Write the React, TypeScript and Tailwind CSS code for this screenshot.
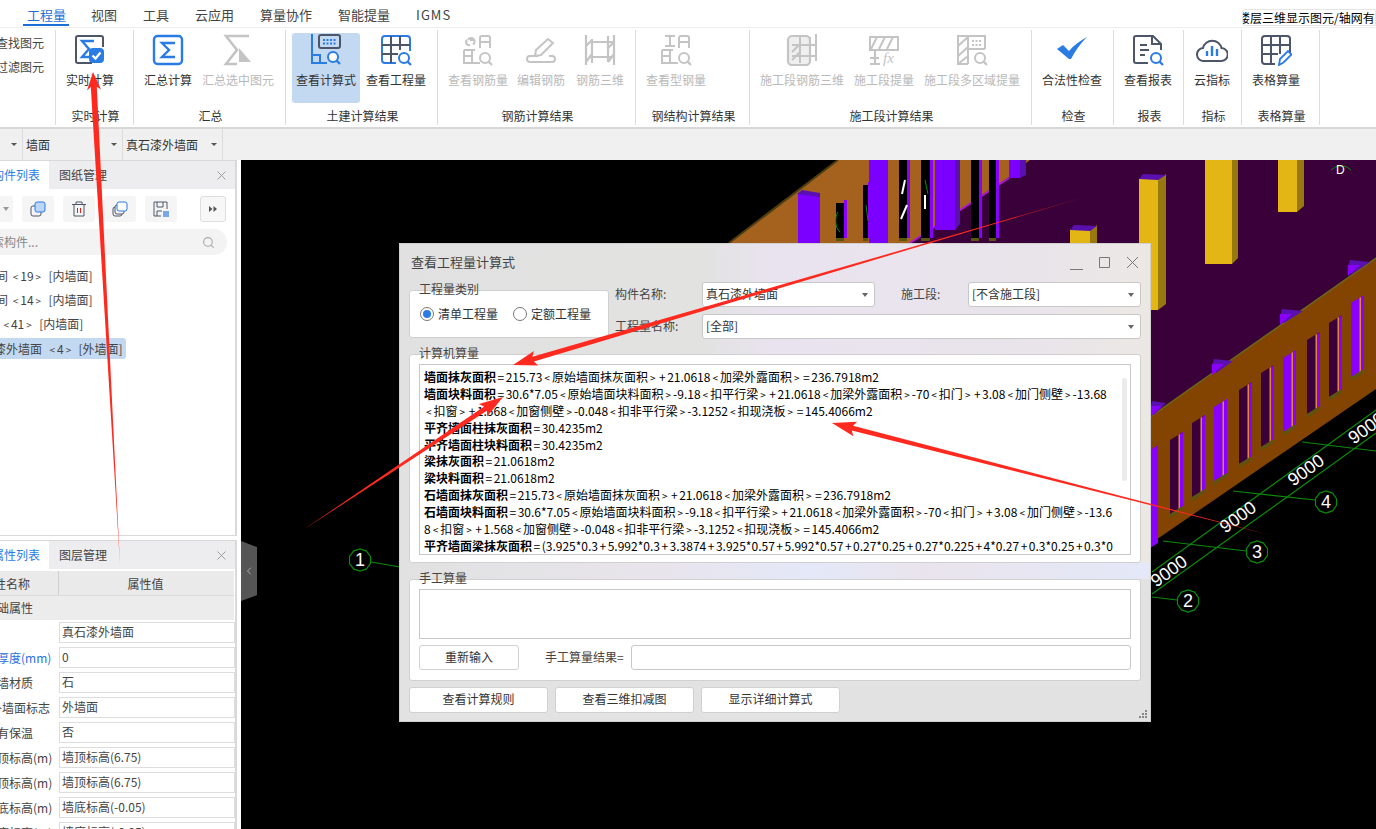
import { Search, X, ChevronLeft } from "lucide-react";
import type { ReactNode } from "react";

const BLUE = "#2a7be4";
const SLATE = "#4d5669";
const GRAY = "#c4c4c4";

function Ico({ children }: { children: ReactNode }) {
  return (
    <svg viewBox="0 0 32 32" className="w-8 h-8 shrink-0" fill="none" strokeWidth="2">
      {children}
    </svg>
  );
}

function Mag({ x, y, c }: { x: number; y: number; c: string }) {
  return (
    <g stroke={c}>
      <circle cx={x} cy={y} r="5" fill="#fff" />
      <path d={`M${x + 3.6} ${y + 3.6}l3.4 3.4`} strokeWidth="2.2" />
    </g>
  );
}

const icons: Record<string, ReactNode> = {
  realtime: (
    <Ico>
      <path d="M18 29H4a2 2 0 0 1-2-2V4a2 2 0 0 1 2-2h23a2 2 0 0 1 2 2v9" stroke={SLATE} />
      <path d="M20 7H8l7 8-7 8h7" stroke={BLUE} strokeWidth="2.4" />
      <rect x="15" y="14" width="15" height="15" rx="4" fill={BLUE} />
      <path d="M18.5 21.5l3 3 5-6" stroke="#fff" strokeWidth="2.2" />
    </Ico>
  ),
  sum: (
    <Ico>
      <rect x="2" y="2" width="28" height="28" rx="3.5" stroke={BLUE} strokeWidth="2.4" />
      <path d="M23 9H10l7 7-7 7h13" stroke={BLUE} strokeWidth="2.4" />
    </Ico>
  ),
  sumSel: (
    <Ico>
      <path d="M27 2H4l11 14L4 30h11" stroke={GRAY} strokeWidth="2.6" />
      <path d="M17 14l12 14H17z" fill={GRAY} />
    </Ico>
  ),
  formula: (
    <Ico>
      <path d="M2 0v29h15M2 21h8v8" stroke={BLUE} />
      <rect x="9" y="1" width="21" height="13" rx="2" stroke={SLATE} />
      <path d="M13 6h14M13 9.5h14" stroke={BLUE} strokeDasharray="2 1.5" />
      <Mag x={23} y={23} c={BLUE} />
    </Ico>
  ),
  table: (
    <Ico>
      <path d="M16 29H5a3 3 0 0 1-3-3V5a3 3 0 0 1 3-3h22a3 3 0 0 1 3 3v12" stroke={BLUE} />
      <path d="M2 11h28M2 20h16M11 2v27M20 2v14" stroke={SLATE} />
      <Mag x={24} y={24} c={BLUE} />
    </Ico>
  ),
  rebar: (
    <Ico>
      <path d="M6 6a3.500 3.500 0 1 1 5 4.500M5 6a3 3 0 0 0 3 5M12 6H8" stroke={GRAY} />
      <path d="M18 14V4a2 2 0 0 1 2-2h6a2 2 0 0 1 2 2v10M18 8h10" stroke={GRAY} />
      <path d="M2 16v13h16M2 22h8M10 16v13M2 16h11" stroke={GRAY} />
      <Mag x={23} y={24} c={GRAY} />
    </Ico>
  ),
  edit: (
    <Ico>
      <path d="M10 22l1-6L23 5l5 4-12 12z" stroke={GRAY} />
      <path d="M13 22H5a3 3 0 0 0 0 6h22a3 3 0 0 0 0-6h-3" stroke={GRAY} />
    </Ico>
  ),
  rebar3d: (
    <Ico>
      <path d="M2 1v30M8 5v24M24 2v26M30 1v30M8 8h22M8 23h22M2 12l6-6M24 14l6-6M2 28l6-8M24 28l6-8" stroke={GRAY} strokeWidth="2.2" />
    </Ico>
  ),
  steel: (
    <Ico>
      <path d="M5 2h10M5 12h10M10 2v10" stroke={GRAY} />
      <path d="M19 14V4a2 2 0 0 1 2-2h6a2 2 0 0 1 2 2v10M19 8h10" stroke={GRAY} />
      <path d="M2 16v13h16M2 22h8M10 16v13M2 16h11" stroke={GRAY} />
      <Mag x={24} y={24} c={GRAY} />
    </Ico>
  ),
  seg3d: (
    <Ico>
      <rect x="2" y="2" width="22" height="29" rx="4" stroke={GRAY} strokeWidth="2.2" fill="#efefef" />
      <path d="M14 3v26M24 3v26M30 0v27M6 11h24M6 22h24M6 18l8-8M6 26l8-8" stroke={GRAY} />
    </Ico>
  ),
  segFx: (
    <Ico>
      <path d="M2 3h28v13H2zM9 3L3 15M17 3l-6 12M25 3l-6 12M7 16v14M2 24h9M2 30h10" stroke={GRAY} />
      <text x="15" y="29" fontFamily="Liberation Serif, serif" fontStyle="italic" fontSize="15" fill={GRAY}>fx</text>
    </Ico>
  ),
  segArea: (
    <Ico>
      <path d="M12 30H2V2h27v13M12 2v28M2 12l10-9M2 22l10-9M2 30l10-8M12 15h17" stroke={GRAY} />
      <path d="M16 7h10M16 11h10" stroke={GRAY} strokeDasharray="2 1.5" />
      <Mag x={24} y={24} c={GRAY} />
    </Ico>
  ),
  check: (
    <Ico>
      <path d="M1 15l6-4 6 6C18 11 24 7 31 3c-7 7-12 14-16 22h-2z" fill={BLUE} />
    </Ico>
  ),
  report: (
    <Ico>
      <path d="M16 29H4a2 2 0 0 1-2-2V4a2 2 0 0 1 2-2h17l8 8v6M20 2v8h9" stroke={SLATE} />
      <path d="M8 11h7M8 16h9M8 21h5" stroke={SLATE} />
      <Mag x={24} y={24} c={BLUE} />
    </Ico>
  ),
  cloud: (
    <Ico>
      <path d="M8 27a6.500 6.500 0 0 1-1-13 9.500 9.500 0 0 1 18.500 0A6.500 6.500 0 0 1 25 27z" stroke={SLATE} />
      <path d="M11 17v5M16 12v10M21 15v7" stroke={BLUE} strokeWidth="2.4" />
    </Ico>
  ),
  sheet: (
    <Ico>
      <path d="M15 30H5a3 3 0 0 1-3-3V5a3 3 0 0 1 3-3h22a3 3 0 0 1 3 3v14" stroke={SLATE} />
      <path d="M2 11h28M2 20h16M11 2v28M20 2v18" stroke={SLATE} />
      <path d="M19 31l1-6 8-8 3.500 3.500-8 8z" stroke={BLUE} fill="#fff" strokeWidth="1.800" />
    </Ico>
  ),
};

type Item = { icon: string; label: string; w: number; off?: boolean; on?: boolean };
type Group = { label: string; w: number; pl: number; items: Item[] };

const groups: Group[] = [
  { label: "实时计算", w: 78, pl: 0, items: [{ icon: "realtime", label: "实时计算", w: 68 }] },
  {
    label: "汇总",
    w: 152,
    pl: 2,
    items: [
      { icon: "sum", label: "汇总计算", w: 64 },
      { icon: "sumSel", label: "汇总选中图元", w: 76, off: true },
    ],
  },
  {
    label: "土建计算结果",
    w: 152,
    pl: 6,
    items: [
      { icon: "formula", label: "查看计算式", w: 68, on: true },
      { icon: "table", label: "查看工程量", w: 72 },
    ],
  },
  {
    label: "钢筋计算结果",
    w: 198,
    pl: 5,
    items: [
      { icon: "rebar", label: "查看钢筋量", w: 70, off: true },
      { icon: "edit", label: "编辑钢筋", w: 56, off: true },
      { icon: "rebar3d", label: "钢筋三维", w: 62, off: true },
    ],
  },
  { label: "钢结构计算结果", w: 114, pl: 5, items: [{ icon: "steel", label: "查看型钢量", w: 70, off: true }] },
  {
    label: "施工段计算结果",
    w: 282,
    pl: 4,
    items: [
      { icon: "seg3d", label: "施工段钢筋三维", w: 96, off: true },
      { icon: "segFx", label: "施工段提量", w: 68, off: true },
      { icon: "segArea", label: "施工段多区域提量", w: 108, off: true },
    ],
  },
  { label: "检查", w: 82, pl: 4, items: [{ icon: "check", label: "合法性检查", w: 72 }] },
  { label: "报表", w: 70, pl: 4, items: [{ icon: "report", label: "查看报表", w: 60 }] },
  { label: "指标", w: 58, pl: 4, items: [{ icon: "cloud", label: "云指标", w: 48 }] },
  { label: "表格算量", w: 78, pl: 4, items: [{ icon: "sheet", label: "表格算量", w: 60 }] },
];

function Ribbon() {
  return (
    <div className="flex h-[102px] shrink-0 border-t border-[#eeeeee] border-b-2 border-b-[#d8d8d8] bg-white">
      <div className="w-[56px] border-r border-[#dcdcdc] my-[2px] flex flex-col gap-[8px] pt-[5px] pl-0 text-[#444] overflow-hidden">
        <span className="-ml-[4px] h-[16px] leading-[16px] whitespace-nowrap">查找图元</span>
        <span className="-ml-[4px] h-[16px] leading-[16px] whitespace-nowrap">过滤图元</span>
      </div>
      {groups.map((g) => (
        <div key={g.label} className="flex flex-col border-r border-[#dcdcdc] my-[2px]" style={{ width: g.w }}>
          <div className="flex h-[73px] pt-[3px]" style={{ paddingLeft: g.pl }}>
            {g.items.map((it) => (
              <div
                key={it.label}
                className={`h-[70px] flex flex-col items-center pt-[1px] rounded-[3px] ${it.on ? "bg-[#c3d9f1]" : ""}`}
                style={{ width: it.w }}
              >
                {icons[it.icon]}
                <span className={`mt-[6px] leading-[16px] whitespace-nowrap ${it.off ? "text-[#b9b9b9]" : "text-[#333]"}`}>
                  {it.label}
                </span>
              </div>
            ))}
          </div>
          <div className="flex-1 flex items-center justify-center pl-[2px] text-[#333] pt-[3px]">{g.label}</div>
        </div>
      ))}
    </div>
  );
}

function ToolBtn({ children, boxed }: { children: ReactNode; boxed?: boolean }) {
  return (
    <div
      className={`h-[26px] flex items-center justify-center rounded-[3px] ${
        boxed ? "w-[26px] ml-[14px] border border-[#dedede] bg-[#f7f7f7]" : "w-[32px] mr-[9px] bg-[#f5f5f5]"
      }`}
    >
      {children}
    </div>
  );
}

// the reference font sets < > + = wider than Noto does
function Seg({ t }: { t: string }) {
  return (
    <>
      {t.split(/([<>+=])/).map((s, i) =>
        s === "<" || s === ">" ? (
          <span key={i} className="mx-[2px] text-[10px]">{s}</span>
        ) : s === "+" || s === "=" ? (
          <span key={i} className="mx-[1.5px]">{s}</span>
        ) : (
          s
        ),
      )}
    </>
  );
}

function ComponentPanel() {
  return (
    <div className="h-[376px] shrink-0 border-r-2 border-b border-t border-[#d9d9d9] bg-white flex flex-col overflow-hidden">
      <PanelTabs a="构件列表" b="图纸管理" />
      <div className="flex items-center mt-[7px] -ml-[9px]">
        <div className="w-[22px] h-[26px] bg-[#f5f5f5] rounded-[3px] mr-[9px] flex items-center justify-end pr-[4px]">
          <span className="w-0 h-0 border-x-[3px] border-x-transparent border-t-[4px] border-t-[#999]" />
        </div>
        <ToolBtn>
          <svg width="16" height="16" viewBox="0 0 16 16" fill="none">
            <rect x="1" y="5" width="10" height="10" rx="2" stroke={SLATE} />
            <rect x="5" y="1" width="10" height="10" rx="2" stroke={BLUE} fill="#bcd6f7" />
          </svg>
        </ToolBtn>
        <ToolBtn>
          <svg width="16" height="16" viewBox="0 0 16 16" fill="none">
            <path d="M1 3.500h14M5 3V1h6v2M3 4v11h10V4" stroke={SLATE} />
            <path d="M6.500 7v5M9.500 7v5" stroke="#e02020" />
          </svg>
        </ToolBtn>
        <ToolBtn>
          <svg width="16" height="16" viewBox="0 0 16 16" fill="none">
            <rect x="1" y="6" width="9" height="9" rx="2" stroke={SLATE} />
            <rect x="3" y="4" width="9" height="9" rx="2" stroke={SLATE} fill="#f5f5f5" />
            <rect x="5" y="1" width="10" height="9" rx="2" stroke={BLUE} fill="#fff" />
          </svg>
        </ToolBtn>
        <ToolBtn>
          <svg width="16" height="16" viewBox="0 0 16 16" fill="none">
            <path d="M8 15H1V1h13v7M4 1v5h6V1M4 15v-5h5" stroke={SLATE} />
            <rect x="10" y="10" width="6" height="6" fill="#7aa9ea" />
          </svg>
        </ToolBtn>
        <ToolBtn boxed>
          <svg width="8" height="6" viewBox="0 0 8 6" fill="#555">
            <path d="M0 0l3.500 3L0 6zM4.500 0L8 3 4.500 6z" />
          </svg>
        </ToolBtn>
      </div>
      <div className="mt-[7px] h-[26px] w-[227px] rounded-r-full bg-[#f3f3f3] flex items-center justify-between pr-[12px] overflow-hidden">
        <span className="-ml-[8px] text-[#888] whitespace-nowrap">索构件...</span>
        <Search size={13} className="text-[#aaa]" />
      </div>
      <div className="mt-[9px] flex flex-col text-[#444]">
        <div className="h-[24px] leading-[24px] -ml-[4px] whitespace-pre"><Seg t="间 <19>  [内墙面]" /></div>
        <div className="h-[24px] leading-[24px] -ml-[4px] whitespace-pre"><Seg t="间 <14>  [内墙面]" /></div>
        <div className="h-[24px] leading-[24px] -ml-[4px] whitespace-pre"><Seg t="  <41>  [内墙面]" /></div>
        <div className="h-[24px] flex items-center">
          <div className="h-[21px] w-[126px] leading-[21px] bg-[#c3d9f1] rounded-r-[3px] pl-0 overflow-hidden whitespace-pre">
            <span className="-ml-[6px] inline-block"><Seg t="漆外墙面  <4>  [外墙面]" /></span>
          </div>
        </div>
      </div>
    </div>
  );
}

function PanelTabs({ a, b }: { a: string; b: string }) {
  return (
    <div className="h-[28px] shrink-0 bg-[#ededef] flex items-center">
      <div className="w-[49px] h-full bg-white text-[#2a7be4] flex items-center justify-end pr-[9px] overflow-hidden whitespace-nowrap">
        <span className="shrink-0">{a}</span>
      </div>
      <span className="ml-[10px] text-[#444]">{b}</span>
      <X size={15} className="ml-auto mr-[6px] text-[#999]" strokeWidth={1.5} />
    </div>
  );
}

const props = [
  { k: "", v: "真石漆外墙面" },
  { k: "厚度(mm)", v: "0", blue: true },
  { k: "墙材质", v: "石" },
  { k: "外墙面标志", v: "外墙面", far: true },
  { k: "有保温", v: "否" },
  { k: "顶标高(m)", v: "墙顶标高(6.75)" },
  { k: "顶标高(m)", v: "墙顶标高(6.75)" },
  { k: "底标高(m)", v: "墙底标高(-0.05)" },
  { k: "底标高(m)", v: "墙底标高(-0.05)" },
];

function PropertyPanel() {
  return (
    <div className="flex-1 mt-[4px] border-r-2 border-t border-[#d9d9d9] bg-white flex flex-col overflow-hidden">
      <PanelTabs a="属性列表" b="图层管理" />
      <div className="h-[25px] mt-[2px] shrink-0 flex bg-[#eaeaea] text-[#444] border-b border-[#dcdcdc] mr-[1px]">
        <div className="w-[59px] border-r border-[#cfcfcf] leading-[25px] overflow-hidden whitespace-nowrap">
          <span className="-ml-[6px] inline-block">性名称</span>
        </div>
        <div className="flex-1 text-center leading-[25px] pr-[2px]">属性值</div>
      </div>
      <div className="h-[24px] shrink-0 bg-[#ececec] leading-[24px] text-[#444] mr-[1px] overflow-hidden whitespace-nowrap">
        <span className="-ml-[3px] inline-block">础属性</span>
      </div>
      {props.map((p, i) => (
        <div key={i} className="h-[25px] shrink-0 flex items-center">
          <div className={`w-[59px] overflow-hidden whitespace-nowrap ${p.blue ? "text-[#2a6fdf]" : "text-[#444]"}`}>
            <span className={`inline-block ${p.far ? "-ml-[10px]" : "-ml-[3px]"}`}>{p.k}</span>
          </div>
          <div className="w-[176px] h-[21px] border border-[#dddddd] leading-[18px] pl-[2px] text-[#444]">{p.v}</div>
        </div>
      ))}
    </div>
  );
}

const rightSlots = [
  [1351, 303, true],
  [1329, 323, false],
  [1307, 340, false],
  [1283, 358, true],
  [1261, 373, false],
  [1239, 390, false],
  [1214, 407, true],
  [1192, 423, false],
  [1170, 440, false],
] as const;

function bubble(x: number, y: number) {
  const pts = [];
  for (let i = 0; i < 10; i++) {
    const a = (i * Math.PI) / 5 + Math.PI / 10;
    pts.push(`${(x + 11 * Math.cos(a)).toFixed(1)},${(y + 11 * Math.sin(a)).toFixed(1)}`);
  }
  return pts.join(" ");
}

function Scene() {
  return (
    <svg viewBox="241 160 1135 669" className="block w-full h-full bg-black">
      {/* floor */}
      <polygon points="1030,160 1376,160 1376,258 1150,417 900,300 910,243" fill="#3a0039" />
      {/* far wall */}
      <polygon points="838,160 1030,160 1009,177 910,243 729,243" fill="#a5621f" />
      <path d="M838 160L729 243" stroke="#4d3d10" strokeWidth="2" />
      <path d="M1009 178L910 243" stroke="#b018d0" strokeWidth="2" />
      {[
        [836, 203, 844],
        [863, 185, 868],
        [899, 160, 907],
        [921, 160, 930],
        [971, 160, 979],
        [989, 160, 996],
      ].map(([x, y, r]) => (
        <g key={x}>
          <rect x={x} y={y} width={r - x} height={238 - y} fill="#000" />
          <rect x={r} y={y - 3} width="3" height={241 - y} fill="#8a00ff" />
          <rect x={x} y={238} width={r - x} height="3" fill="#5a5510" />
        </g>
      ))}
      <path d="M907 205l-6 14M905 180l-3 14M925 195v14" stroke="#fff" strokeWidth="2" fill="none" />
      <path d="M838 212a7 12 0 0 0 2 20M866 205l2 16M925 180l3 14" stroke="#0a8a0a" fill="none" />
      <rect x="798" y="194" width="22" height="50" fill="#7b00ff" />
      <polygon points="797,194 802,190 820,193 820,197" fill="#5a10b0" />
      <rect x="869" y="160" width="19" height="84" fill="#7b00ff" />
      <rect x="935" y="160" width="20" height="70" fill="#7b00ff" />
      <polygon points="955,160 960,160 960,224 955,230" fill="#5a10b0" />
      <rect x="1009" y="160" width="11" height="18" fill="#7b00ff" />
      <polygon points="1020,160 1026,160 1026,175 1020,178" fill="#5a10b0" />
      {/* yellow columns */}
      {[
        [1139, 179, 1158, 310, 1166],
        [1205, 150, 1232, 264, 1238],
        [1278, 150, 1297, 212, 1304],
        [1070, 230, 1090, 300, 1097],
      ].map(([x, t, r, b, s]) => (
        <g key={x}>
          <rect x={x} y={t} width={r - x} height={b - t} fill="#e3b616" />
          <polygon points={`${r},${t} ${s},${t - 5} ${s},${b - 6} ${r},${b}`} fill="#97790f" />
          <polygon points={`${x},${t} ${x + 4},${t - 5} ${s},${t - 4} ${r},${t + 1}`} fill="#5a10b0" />
        </g>
      ))}
      <path d="M1331 170a14 14 0 0 1 20 0" stroke="#0a8a0a" fill="none" />
      <text x="1336" y="174" fontSize="12" fill="#fff" fontFamily="Liberation Sans, sans-serif">D</text>
      {/* near wall */}
      <polygon points="1376,258 1150,417 1150,544 1376,389" fill="#834402" />
      <path d="M1376 258L1150 417" stroke="#6a6a1a" strokeWidth="1.500" />
      {rightSlots.map(([x, y, full]) => (
        <g key={x}>
          <polygon points={`${x},${y} ${x + 13},${y - 8} ${x + 13},${y + 66} ${x},${y + 74}`} fill={full ? "#8a00ff" : "#3a0039"} />
          <polygon points={`${x + 9},${y - 5} ${x + 13},${y - 8} ${x + 13},${y + 66} ${x + 9},${y + 69}`} fill="#8a00ff" />
          <polygon points={`${x + 8.5},${y - 5} ${x + 10},${y - 6} ${x + 10},${y + 68} ${x + 8.5},${y + 69}`} fill="#e08a30" />
          <polygon points={`${x},${y + 74} ${x + 13},${y + 66} ${x + 13},${y + 69} ${x},${y + 78}`} fill="#5a5510" />
        </g>
      ))}
      <polygon points="1150,450 1158,445 1158,543 1150,548" fill="#8a00ff" />
      {[
        [1348, 268, 1370],
        [1280, 317, 1303],
        [1212, 367, 1233],
        [1150, 409, 1166],
      ].map(([x, y, r]) => (
        <g key={x}>
          <polygon points={`${x},${y} ${x + 2},${y - 8} ${r},${y - 6} ${x + 4},${y + 6}`} fill="#5a10b0" />
          <polygon points={`${x},${y - 3} ${x + 12},${y - 3} ${x},${y + 8}`} fill="#8a00ff" />
        </g>
      ))}
      {/* grid */}
      <g stroke="#0a8a0a" strokeWidth="1.200" fill="none">
        <path d="M1152 572L1376 410M1152 594L1376 433" />
        <path d="M1152 597L1177 600M1163 541L1246 551M1233 491L1315 500M1302 442L1376 451M371 562L400 567" />
        {[
          [360, 560],
          [1188, 601],
          [1257, 552],
          [1326, 502],
        ].map(([x, y]) => (
          <polygon key={x} points={bubble(x, y)} fill="#000" />
        ))}
      </g>
      <g fill="#fff" fontSize="18" fontFamily="Liberation Sans, sans-serif" textAnchor="middle">
        <text x="360" y="566">1</text>
        <text x="1188" y="607">2</text>
        <text x="1257" y="558">3</text>
        <text x="1326" y="508">4</text>
        <text transform="translate(1172.5 576) rotate(-36)">9000</text>
        <text transform="translate(1241.5 522) rotate(-36)">9000</text>
        <text transform="translate(1309.5 475) rotate(-36)">9000</text>
        <text transform="translate(1370 433) rotate(-36)">9000</text>
      </g>
    </svg>
  );
}

function Select({ value, className }: { value: string; className: string }) {
  return (
    <div className={`h-[25px] bg-white rounded-[3px] border border-[#c8c8c8] flex items-center justify-between pl-[3px] pr-[6px] text-[#333] ${className}`}>
      <span className="pb-[2px]">{value}</span>
      <span className="w-0 h-0 border-x-[3px] border-x-transparent border-t-[4px] border-t-[#666]" />
    </div>
  );
}

type Line = { b?: string; t: string };

const lines: Line[] = [
  { b: "墙面抹灰面积", t: "=215.73<原始墙面抹灰面积>+21.0618<加梁外露面积>=236.7918m2" },
  { b: "墙面块料面积", t: "=30.6*7.05<原始墙面块料面积>-9.18<扣平行梁>+21.0618<加梁外露面积>-70<扣门>+3.08<加门侧壁>-13.68" },
  { t: "<扣窗>+1.568<加窗侧壁>-0.048<扣非平行梁>-3.1252<扣现浇板>=145.4066m2" },
  { b: "平齐墙面柱抹灰面积", t: "=30.4235m2" },
  { b: "平齐墙面柱块料面积", t: "=30.4235m2" },
  { b: "梁抹灰面积", t: "=21.0618m2" },
  { b: "梁块料面积", t: "=21.0618m2" },
  { b: "石墙面抹灰面积", t: "=215.73<原始墙面抹灰面积>+21.0618<加梁外露面积>=236.7918m2" },
  { b: "石墙面块料面积", t: "=30.6*7.05<原始墙面块料面积>-9.18<扣平行梁>+21.0618<加梁外露面积>-70<扣门>+3.08<加门侧壁>-13.6" },
  { t: "8<扣窗>+1.568<加窗侧壁>-0.048<扣非平行梁>-3.1252<扣现浇板>=145.4066m2" },
  { b: "平齐墙面梁抹灰面积", t: "=(3.925*0.3+5.992*0.3+3.3874+3.925*0.57+5.992*0.57+0.27*0.25+0.27*0.225+4*0.27+0.3*0.25+0.3*0" },
];

function Btn({ label, className }: { label: string; className: string }) {
  return (
    <div className={`h-[26px] pb-[2px] bg-white rounded-[3px] border border-[#d0d0d0] flex items-center justify-center text-[#333] ${className}`}>
      {label}
    </div>
  );
}

function Dialog() {
  return (
    <div className="absolute left-[399px] top-[243px] w-[752px] h-[479px] border border-[#d0d0d0] bg-[linear-gradient(90deg,#e1e1e1_0%,#e2e2e1_40%,#e9e3ef_50%,#e8e4ea_85%,#ebe8e4_100%)] flex flex-col text-[12px]">
      <div className="px-[9px] flex flex-col shrink-0">
        <div className="h-[38px] shrink-0 flex items-center text-[13px] text-[#444] pl-[2px]">
          <span className="pb-[2px]">查看工程量计算式</span>
          <svg width="72" height="16" viewBox="0 0 72 16" className="ml-auto text-[#777]" fill="none" stroke="currentColor">
            <path d="M1 14.500h13M30.500 2.500h10v10h-10zM58 2l11 11M69 2L58 13" />
          </svg>
        </div>
        <div className="h-[57px] shrink-0 flex">
          <div className="w-[200px] h-[48px] mt-[8px] bg-white rounded-[3px] border border-[#d0d0d0] flex flex-col">
            <span className="-mt-[9px] ml-[9px] h-[14px] leading-[14px] text-[#444]">工程量类别</span>
            <div className="flex items-center mt-[9px] ml-[10px] text-[#333]">
              <span className="w-[14px] h-[14px] rounded-full border border-[#777] flex items-center justify-center">
                <span className="w-[8px] h-[8px] rounded-full bg-[#2a7be4]" />
              </span>
              <span className="ml-[4px]">清单工程量</span>
              <span className="ml-[15px] w-[14px] h-[14px] rounded-full border border-[#777]" />
              <span className="ml-[4px]">定额工程量</span>
            </div>
          </div>
          <div className="flex-1 ml-[6px] flex flex-col gap-[7px]">
            <div className="flex items-center">
              <span className="w-[87px] text-[#444] pb-[2px]">构件名称:</span>
              <Select value="真石漆外墙面" className="w-[173px]" />
              <span className="ml-[26px] w-[67px] text-[#444] pb-[2px]">施工段:</span>
              <Select value="[不含施工段]" className="w-[173px]" />
            </div>
            <div className="flex items-center">
              <span className="w-[87px] text-[#444] pb-[2px]">工程量名称:</span>
              <Select value="[全部]" className="w-[439px]" />
            </div>
          </div>
        </div>
        <div className="h-[209px] mt-[15px] shrink-0 bg-white rounded-[3px] border border-[#d0d0d0] flex flex-col">
          <span className="-mt-[9px] ml-[9px] h-[14px] leading-[14px] text-[#444]">计算机算量</span>
          <div className="relative mx-[9px] mt-[4px] h-[191px] border border-[#c8c8c8] overflow-hidden pl-[4px] pt-[3px] text-black">
            {lines.map((l, i) => (
              <div key={i} className="h-[16.9px] leading-[17px] whitespace-pre">
                {l.b && <b className="font-bold">{l.b}</b>}
                <Seg t={l.t} />
              </div>
            ))}
            <div className="absolute right-[3px] top-[13px] w-[5px] h-[103px] bg-[#ebebeb] rounded-full" />
          </div>
        </div>
      </div>
      <div className="h-[16px] shrink-0 bg-[linear-gradient(90deg,#e1e1e1_0%,#e4e3e6_18%,#e8e4ec_35%,#e4e8f8_55%,#e9e4ec_70%,#e4e8f8_100%)]" />
      <div className="px-[9px] flex-1 bg-[#e2e2e2] flex flex-col">
        <div className="h-[102px] shrink-0 bg-white rounded-[3px] border border-[#d0d0d0] flex flex-col">
          <span className="-mt-[9px] ml-[9px] h-[14px] leading-[14px] text-[#444]">手工算量</span>
          <div className="mx-[9px] mt-[4px] h-[50px] border border-[#c8c8c8]" />
          <div className="mx-[9px] mt-[6px] flex items-center">
            <Btn label="重新输入" className="w-[100px] !h-[25px]" />
            <span className="ml-[26px] w-[86px] text-[#444] pb-[1px]">手工算量结果=</span>
            <div className="flex-1 h-[25px] rounded-[3px] border border-[#c8c8c8]" />
          </div>
        </div>
        <div className="mt-[6px] flex gap-[7px]">
          <Btn label="查看计算规则" className="w-[139px]" />
          <Btn label="查看三维扣减图" className="w-[139px]" />
          <Btn label="显示详细计算式" className="w-[139px]" />
        </div>
      </div>
      <svg width="10" height="10" viewBox="0 0 10 10" className="absolute right-[2px] bottom-[2px]" fill="#888">
        <path d="M7 1h2v2H7zM4 4h2v2H4zM7 4h2v2H7zM1 7h2v2H1zM4 7h2v2H4zM7 7h2v2H7z" />
      </svg>
    </div>
  );
}

function arrowPoints(tx: number, ty: number, x: number, y: number, shaft: number, head: number, len: number) {
  const d = Math.hypot(x - tx, y - ty);
  const ux = (x - tx) / d;
  const uy = (y - ty) / d;
  const nx = -uy;
  const ny = ux;
  const bx = x - ux * len;
  const by = y - uy * len;
  const nk = bx + ux * 3;
  const nl = by + uy * 3;
  const p = (a: number, b: number) => `${a.toFixed(1)},${b.toFixed(1)}`;
  return [
    p(tx, ty),
    p(nk + (nx * shaft) / 2, nl + (ny * shaft) / 2),
    p(bx + (nx * head) / 2, by + (ny * head) / 2),
    p(x, y),
    p(bx - (nx * head) / 2, by - (ny * head) / 2),
    p(nk - (nx * shaft) / 2, nl - (ny * shaft) / 2),
  ].join(" ");
}

function Arrows() {
  return (
    <svg className="absolute inset-0 pointer-events-none" width="1376" height="829" viewBox="0 0 1376 829">
      <polygon points={arrowPoints(120, 565, 93, 72, 6, 14, 18)} fill="#ff2a1f" />
      <polygon points={arrowPoints(1085, 197, 513, 365, 5, 15, 24)} fill="#ff2a1f" />
      <polygon points={arrowPoints(303, 530, 503, 397, 5, 15, 24)} fill="#ff2a1f" />
      <polygon points={arrowPoints(1270, 535, 832, 423, 5, 15, 24)} fill="#ff2a1f" />
    </svg>
  );
}

const tabs = ["视图", "工具", "云应用", "算量协作", "智能提量"];

export default function App() {
  return (
    <div className="relative w-[1376px] h-[829px] overflow-hidden bg-white flex flex-col text-[12px] text-[#333] font-['Noto_Sans_CJK_SC','Noto_Sans',sans-serif]">
      <div className="h-[27px] shrink-0 flex items-center pl-[26px] text-[13px] text-[#444] gap-[26px] bg-white">
        <span className="relative ml-[1px] -mr-[1px] text-[#1d6fd8] h-[27px] leading-[30px]">
          工程量
          <span className="absolute -left-[4px] -right-[3px] bottom-[1px] h-[2px] bg-[#1d6fd8]" />
        </span>
        {tabs.map((t) => (
          <span key={t} className="leading-[30px] h-[27px]">{t}</span>
        ))}
        <span className="leading-[30px] h-[27px] tracking-[1px]">IGMS</span>
        <div className="ml-auto w-[134px] h-[17px] mt-[7px] mr-0 bg-white border border-[#e6e6e6] rounded-l-[3px] overflow-hidden whitespace-nowrap text-[12px] text-black leading-[15px]">
          <span className="-ml-[5px] inline-block">楼层三维显示图元/轴网有</span>
        </div>
      </div>
      <Ribbon />
      <div className="h-[31px] shrink-0 bg-[#f0f0f0] flex items-center text-[#333]">
        {["", "墙面", "真石漆外墙面"].map((t, i) => (
          <div key={i} className={`h-full flex items-center justify-between border-r border-[#dcdcdc] pr-[5px] pl-[3px] ${i === 0 ? "w-[23px]" : "w-[100px]"}`}>
            <span>{t}</span>
            <span className="w-0 h-0 border-x-[3px] border-x-transparent border-t-[3px] border-t-[#555]" />
          </div>
        ))}
      </div>
      <div className="flex-1 flex min-h-0">
        <div className="w-[241px] shrink-0 pr-[4px] flex flex-col">
          <ComponentPanel />
          <PropertyPanel />
        </div>
        <div className="flex-1 relative">
          <Scene />
          <div className="absolute left-0 top-[381px] w-[16px] h-[60px] bg-[#555] rounded-r-[6px] flex items-center justify-center [clip-path:polygon(0_0,100%_10%,100%_90%,0_100%)]">
            <ChevronLeft size={12} className="text-[#aaa]" />
          </div>
        </div>
      </div>
      <Dialog />
      <Arrows />
    </div>
  );
}
